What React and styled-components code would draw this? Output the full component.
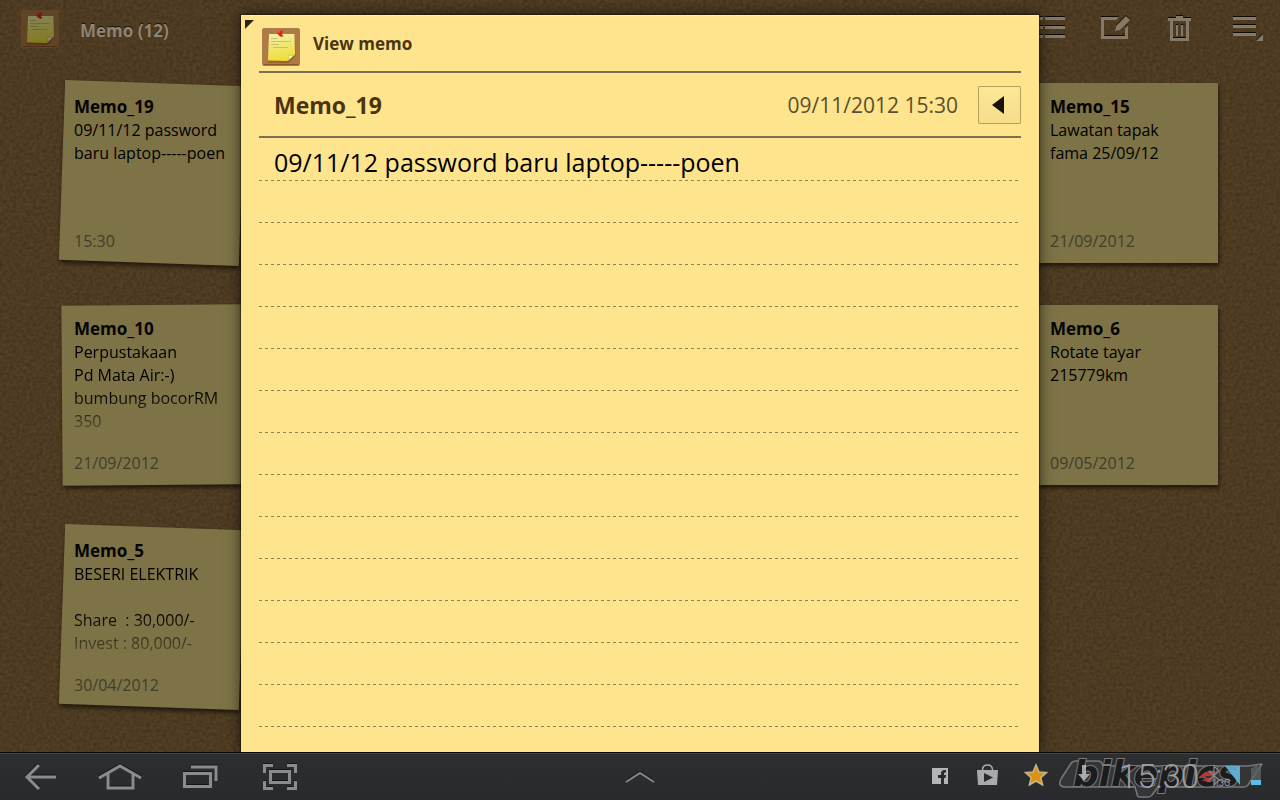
import styled, { createGlobalStyle } from "styled-components";

const cork = `url("data:image/svg+xml,%3Csvg xmlns='http://www.w3.org/2000/svg' width='320' height='320'%3E%3Cfilter id='n' x='0' y='0' width='100%25' height='100%25' color-interpolation-filters='sRGB'%3E%3CfeTurbulence type='fractalNoise' baseFrequency='0.3' numOctaves='3' stitchTiles='stitch'/%3E%3CfeColorMatrix values='0 0 0 0 0.12 0 0 0 0 0.08 0 0 0 0 0.03 0.55 0 0 0 -0.12'/%3E%3C/filter%3E%3Crect width='320' height='320' filter='url(%23n)'/%3E%3C/svg%3E")`;

const GlobalStyle = createGlobalStyle`
  * {
    box-sizing: border-box;
  }
  body {
    margin: 0;
    font-family: "Open Sans", "Noto Sans", sans-serif;
  }
  h1, h2, h3, p {
    margin: 0;
  }
  svg {
    display: block;
  }
`;

const Screen = styled.div`
  display: flex;
  flex-direction: column;
  height: 100vh;
  overflow: hidden;
`;

const Board = styled.main`
  position: relative;
  flex: 1;
  min-height: 0;
  overflow: hidden;
  background: ${cork}, #564227;
`;

const AppBar = styled.header`
  display: flex;
  align-items: center;
  height: 58px;
  padding-left: 21px;
`;

const AppTitle = styled.h1`
  flex: 1;
  margin-left: 21px;
  padding-top: 3px;
  font-size: 17px;
  line-height: 24px;
  font-weight: 700;
  color: #908474;
  text-shadow: 0 -1px 0 #1c1408;
`;

const IconButton = styled.button`
  display: flex;
  align-items: center;
  justify-content: center;
  width: ${(p) => p.$width || 64}px;
  height: 48px;
  padding: 0;
  border: none;
  background: none;
  color: ${(p) => p.$color || "#857969"};
`;

const Raised = styled.svg`
  overflow: visible;
  filter: drop-shadow(0 -1px 0 #0e0a04);
`;

const NavGlyph = styled.svg`
  overflow: visible;
  filter: drop-shadow(0 -1px 0 #141516);
`;

const Dimmed = styled.div`
  filter: brightness(0.55);
`;

const Notes = styled.section`
  display: grid;
  grid-template-columns: repeat(5, 180px);
  grid-auto-rows: 180px;
  justify-content: space-between;
  row-gap: 42px;
  padding: 25px 62px 40px;
`;

const Note = styled.article`
  position: relative;
  z-index: 0;
  grid-column: ${(p) => p.$column};
  grid-row: ${(p) => p.$row};
  display: flex;
  flex-direction: column;
  padding: 12px 8px 11px 12px;
  &::before {
    content: "";
    position: absolute;
    inset: 0;
    z-index: -1;
    background: #7e7346;
    box-shadow: 1px 3px 4px rgba(15, 8, 0, 0.7);
    transform: rotate(${(p) => p.$tilt}deg);
  }
`;

const NoteTitle = styled.h3`
  font-size: 17px;
  line-height: 24px;
  font-weight: 700;
  color: #050401;
`;

const NoteText = styled.p`
  height: 92px;
  overflow: hidden;
  font-size: 16px;
  line-height: 23px;
  white-space: pre;
  color: #000;
  mask-image: ${(p) =>
    p.$faded ? "linear-gradient(#000 55%, rgba(0, 0, 0, 0.3) 100%)" : "none"};
`;

const NoteDate = styled.time`
  margin-top: auto;
  font-size: 16px;
  line-height: 22px;
  color: #423d30;
`;

const Dialog = styled.section`
  position: absolute;
  top: 15px;
  bottom: 0;
  left: 0;
  right: 0;
  display: flex;
  flex-direction: column;
  width: 100%;
  max-width: 798px;
  margin: 0 auto;
  padding: 0 18px;
  border-top: 1px solid #fff0b8;
  background: #fee48c;
  box-shadow: 0 0 1px 1px rgba(20, 12, 0, 0.5), 0 0 14px rgba(0, 0, 0, 0.6);
`;

const Corner = styled.svg`
  position: absolute;
  top: 4px;
  left: 4px;
`;

const DialogHeader = styled.header`
  display: flex;
  align-items: center;
  height: 57px;
  padding: 6px 3px 0;
  border-bottom: 2px solid #7e6f50;
`;

const DialogTitle = styled.h2`
  margin: 0 0 6px 13px;
  font-size: 17px;
  line-height: 24px;
  font-weight: 700;
  color: #4a3613;
`;

const MemoHeader = styled.div`
  display: flex;
  align-items: center;
  height: 65px;
  margin-bottom: 1px;
  padding-left: 15px;
  border-bottom: 2px solid #7e6f50;
`;

const MemoTitle = styled.h2`
  flex: 1;
  font-size: 23px;
  line-height: 32px;
  font-weight: 700;
  color: #4a3310;
`;

const MemoDate = styled.time`
  margin-right: 20px;
  font-size: 21px;
  line-height: 32px;
  color: #5c4e30;
`;

const BackButton = styled.button`
  display: flex;
  align-items: center;
  justify-content: center;
  width: 43px;
  height: 38px;
  padding: 0 4px 0 0;
  border: 1px solid #b6a05c;
  border-radius: 1px;
  background: linear-gradient(#fde897, #f4dc8a);
`;

const MemoBody = styled.p`
  flex: 1;
  margin-right: 2px;
  padding: 2px 15px 0;
  font-size: 25px;
  line-height: 42px;
  color: #000;
  background-image: linear-gradient(#fee48c 41px, transparent 41px),
    linear-gradient(to right, #94804c 3px, transparent 3px);
  background-size: 100% 42px, 6px 42px;
`;

const NavBar = styled.nav`
  position: relative;
  display: flex;
  align-items: center;
  height: 48px;
  border-top: 1px solid #0a0a08;
  box-shadow: inset 0 1px 0 #47463e;
  background: linear-gradient(#2c2e2f, #292a2d);
`;

const NavGroup = styled.div`
  flex: 1;
  display: flex;
  align-items: center;
  justify-content: ${(p) => p.$align || "flex-start"};
`;

const Tray = styled.div`
  display: flex;
  align-items: center;
  gap: 8px;
  padding-right: 19px;
`;

const TrayIcon = styled.svg`
  position: relative;
  z-index: 1;
  width: ${(p) => p.$width || 40}px;
  height: 32px;
  overflow: visible;
`;

const Clock = styled.time`
  position: relative;
  z-index: 1;
  margin: 0 8px;
  font-family: Roboto, sans-serif;
  font-size: 33px;
  line-height: 40px;
  font-weight: 300;
  color: #9b9da0;
`;

const Watermark = styled.svg`
  position: absolute;
  top: 4px;
  right: 14px;
  overflow: visible;
`;

const memos = [
  { title: "Memo_19", text: "09/11/12 password\nbaru laptop-----poen", date: "15:30", column: 1, row: 1, tilt: 2 },
  { title: "Memo_15", text: "Lawatan tapak\nfama 25/09/12", date: "21/09/2012", column: 5, row: 1, tilt: 0 },
  { title: "Memo_10", text: "Perpustakaan\nPd Mata Air:-)\nbumbung bocorRM\n350", date: "21/09/2012", column: 1, row: 2, tilt: -0.4, faded: true },
  { title: "Memo_6", text: "Rotate tayar\n215779km", date: "09/05/2012", column: 5, row: 2, tilt: 0 },
  { title: "Memo_5", text: "BESERI ELEKTRIK\n\nShare  : 30,000/-\nInvest : 80,000/-", date: "30/04/2012", column: 1, row: 3, tilt: 2, faded: true },
];

const MemoIcon = ({ id }) => (
  <svg width="38" height="38" viewBox="0 0 38 38" aria-hidden="true">
    <defs>
      <linearGradient id={id} x1="0" y1="0" x2="0.2" y2="1">
        <stop offset="0" stopColor="#f3efa8" />
        <stop offset="1" stopColor="#efdf3c" />
      </linearGradient>
    </defs>
    <rect x="0.5" y="0.5" width="37" height="37" rx="1.5" fill="#b07a44" stroke="#a3814c" />
    <path d="M2 36.5h34" stroke="#8a5426" />
    <path d="M6 33l-.5 1.5 21 .5 7-7-.5-21z" fill="#7c4a1c" opacity="0.5" />
    <path d="M7 6h25.500l.5 20.500-7.500 6.500L6 32.500z" fill={`url(#${id})`} />
    <path d="M25.500 33c1.500-2 1.500-4 1-6 2 .8 4.500.6 6.500-.5z" fill="#fdf9d4" stroke="#b9a83a" strokeWidth="0.5" />
    <path d="M9 10.500h6M9 13.500h20M9 16.500h8M11 19.500h15" stroke="#a8a763" strokeWidth="0.6" />
    <path d="M15 1.500l4 1.200 2-.5-1 4 1.500 2.300-2.700.3-3-2.300z" fill="#d32a1c" />
    <path d="M15 1.500l3.500 1-1 2.500-2.500-.5z" fill="#ec5a3c" />
  </svg>
);

const Toolbar = () => (
  <>
    <IconButton aria-label="List view">
      <Raised width="26" height="24" fill="currentColor">
        <path d="M0 0h4v3H0zM6 0h20v3H6zM0 9h4v3H0zM6 9h20v3H6zM0 18h4v3H0zM6 18h20v3H6z" />
      </Raised>
    </IconButton>
    <IconButton aria-label="New memo">
      <Raised width="30" height="26" fill="currentColor">
        <path d="M0 1h18l-3 3H3v16h21v-8l3-3v14H0z" />
        <path d="M15 10L25 0l4 4-10 10-5 1z" />
      </Raised>
    </IconButton>
    <IconButton aria-label="Delete">
      <Raised width="24" height="26" fill="currentColor">
        <path d="M0 2h8V0h7v2h8v3H0z" />
        <path fillRule="evenodd" d="M2 5h19v20H2zM5 5v17h13V5z" />
        <path d="M8 9h2v11H8zM13 9h2v11h-2z" />
      </Raised>
    </IconButton>
    <IconButton $width={68} aria-label="Menu">
      <Raised width="30" height="26" fill="currentColor">
        <path d="M2 1h23v3H2zM2 9h23v3H2zM2 17h23v3H2zM32 18v7h-7z" />
      </Raised>
    </IconButton>
  </>
);

const SystemButtons = () => (
  <NavGroup>
    <IconButton $width={80} $color="#8b8c8d" aria-label="Back">
      <NavGlyph width="32" height="26" fill="none" stroke="currentColor" strokeWidth="3">
        <path d="M15 1L3 13l12 12M3 13h29" />
      </NavGlyph>
    </IconButton>
    <IconButton $width={80} $color="#8b8c8d" aria-label="Home">
      <NavGlyph width="44" height="26" fill="none" stroke="currentColor" strokeWidth="3">
        <path d="M1 14L22 2l21 12M10 9v15h25V9" />
      </NavGlyph>
    </IconButton>
    <IconButton $width={80} $color="#8b8c8d" aria-label="Recent apps">
      <NavGlyph width="34" height="24" fill="none" stroke="currentColor" strokeWidth="3">
        <path d="M1.500 8.500h26v13h-26zM8 2h25v14" />
      </NavGlyph>
    </IconButton>
    <IconButton $width={80} $color="#8b8c8d" aria-label="Screenshot">
      <NavGlyph width="34" height="26" fill="none" stroke="currentColor" strokeWidth="3">
        <path d="M7.500 7.500h19v11h-19zM1.500 9V1.500H10M24 1.500h8.500V9M1.500 17v7.500H10M24 24.500h8.500V17" />
      </NavGlyph>
    </IconButton>
  </NavGroup>
);

const StatusTray = () => (
  <Tray>
    <TrayIcon viewBox="0 0 40 32">
      <path d="M13 7h16v16H13z" fill="#b4b5b6" />
      <path d="M22 23v-6h-3v-3h3v-1.500q0-3.500 3.500-3.500h1.500v2.500h-1.200q-.8 0-.8 1.500v1h2l-.4 3H25v6z" fill="#292b2c" />
    </TrayIcon>
    <TrayIcon viewBox="0 0 40 32">
      <path d="M10 9h21l-1 15H11z" fill="#a9aaab" />
      <path d="M15.500 9q0-5 5-5t5 5" fill="none" stroke="#a9aaab" strokeWidth="1.500" />
      <path d="M17 12l9 4.500-9 4.500z" fill="#292b2c" />
    </TrayIcon>
    <TrayIcon viewBox="0 0 40 32">
      <path
        d="M21 4l3 7 7.500.6-5.700 5 1.800 7.400-6.600-4-6.600 4 1.800-7.400-5.700-5L18 11z"
        fill="#dc9112"
        stroke="#c9b48e"
        strokeWidth="1.500"
      />
    </TrayIcon>
    <TrayIcon viewBox="0 0 40 32">
      <path d="M19 4h4v9h4l-6 7-6-7h4z" fill="#c4c5c6" opacity="0.8" />
    </TrayIcon>
    <Clock>15:30</Clock>
    <TrayIcon $width={46} viewBox="0 0 46 32">
      <path d="M-6 10l10 9-5 5V5l5 5-10 9" fill="none" stroke="#85878a" strokeWidth="1.200" />
      <path d="M10 5h15v19z" fill="#69bde6" opacity="0.85" />
      <path d="M36 7h2V4h5v3h3v17H36z" fill="#5b6063" opacity="0.8" />
      <path d="M36 19h10v5H36z" fill="#5fbbe8" />
      <text x="4" y="25" fontFamily="Roboto" fontSize="9" fill="#a9aaab">
        3G
      </text>
    </TrayIcon>
  </Tray>
);

const BrandMark = () => (
  <Watermark width="210" height="42" viewBox="0 0 210 42" aria-label="bikepics">
    <path
      d="M20 4h22q4 0 5 5h145l14-2-14 21q-1 2-4 2h-86l-6 8q-1 2-4 2H84q-3 0-3-3l-2-7H10q-9 0-5-8L14 8q2-4 6-4z"
      fill="#333537"
      stroke="#77797a"
      strokeWidth="1.500"
      strokeLinejoin="round"
    />
    <text
      x="100"
      y="29"
      fontFamily="DejaVu Sans"
      fontWeight="700"
      fontStyle="italic"
      fontSize="36"
      textAnchor="middle"
      fill="#1b1c1e"
      stroke="#77797a"
      strokeWidth="2"
      paintOrder="stroke"
    >
      bikepics
    </text>
    <path d="M142 21l7-6h13l-5 4h-7l-2 2zM150 21h8l-4 3h-8z" fill="#b23a34" />
  </Watermark>
);

export default function App() {
  return (
    <Screen>
      <GlobalStyle />
      <Board>
        <AppBar>
          <Dimmed>
            <MemoIcon id="bar-icon" />
          </Dimmed>
          <AppTitle>Memo (12)</AppTitle>
          <Toolbar />
        </AppBar>
        <Notes>
          {memos.map((memo) => (
            <Note key={memo.title} $column={memo.column} $row={memo.row} $tilt={memo.tilt}>
              <NoteTitle>{memo.title}</NoteTitle>
              <NoteText $faded={memo.faded}>{memo.text}</NoteText>
              <NoteDate>{memo.date}</NoteDate>
            </Note>
          ))}
        </Notes>
        <Dialog role="dialog" aria-labelledby="dialog-title">
          <Corner width="9" height="9">
            <path d="M0 0h9L0 9z" fill="#2b2411" />
          </Corner>
          <DialogHeader>
            <MemoIcon id="dialog-icon" />
            <DialogTitle id="dialog-title">View memo</DialogTitle>
          </DialogHeader>
          <MemoHeader>
            <MemoTitle>Memo_19</MemoTitle>
            <MemoDate>09/11/2012 15:30</MemoDate>
            <BackButton aria-label="Previous memo">
              <svg width="12" height="18">
                <path d="M12 0v18L0 9z" fill="#17130a" />
              </svg>
            </BackButton>
          </MemoHeader>
          <MemoBody>09/11/12 password baru laptop-----poen</MemoBody>
        </Dialog>
      </Board>
      <NavBar>
        <SystemButtons />
        <IconButton $color="#85878a" aria-label="Quick panel">
          <NavGlyph width="30" height="12" fill="none" stroke="currentColor" strokeWidth="2">
            <path d="M1 11L15 2l14 9" />
          </NavGlyph>
        </IconButton>
        <NavGroup $align="flex-end">
          <StatusTray />
        </NavGroup>
        <BrandMark />
      </NavBar>
    </Screen>
  );
}
